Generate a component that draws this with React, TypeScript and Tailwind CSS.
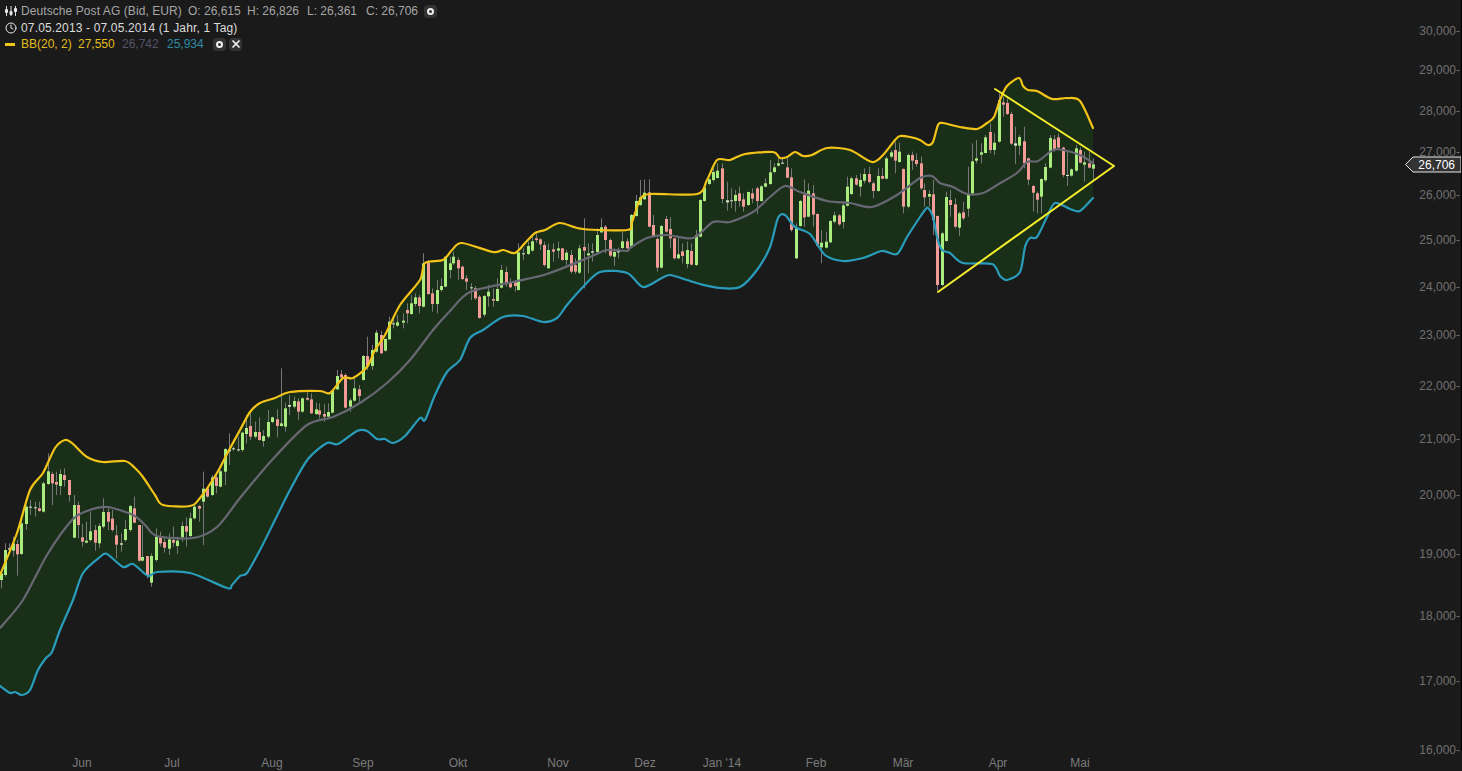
import { Clock, X } from 'lucide-react';

// band lines in page pixels
const upperBand = '0,575 17,533 30,490 43,473 55,448 65,440 72,443 87,457 103,462 125,461 135,468 143,477 155,495 163,505 190,506 200,498 217,473 228,452 240,430 250,412 260,403 275,398 290,392 320,391 330,393 343,378 353,378 367,367 375,350 385,335 400,305 420,280 425,263 443,260 452,250 462,243 493,252 503,250 515,253 525,243 535,233 545,230 560,223 583,229 627,230 632,222 640,200 650,194 697,194 707,180 717,160 730,160 745,154 773,152 780,158 787,157 795,152 803,156 812,155 827,148 850,150 872,162 883,155 895,140 900,136 910,137 920,140 928,145 933,142 938,125 943,123 960,127 977,129 987,123 994,117 1000,100 1007,86 1019,78 1023,86 1028,90 1037,91 1052,99 1067,98 1080,101 1093,128';
const midBand = '0,628 23,600 47,555 72,520 87,511 107,507 133,515 145,525 157,536 193,538 217,527 240,498 272,460 307,425 333,417 360,403 387,383 410,360 433,330 450,311 470,292 513,282 547,274 590,257 607,250 627,251 630,248 647,238 667,235 693,238 713,222 730,222 753,212 770,197 785,186 800,192 827,201 850,203 872,207 897,195 920,178 932,176 940,183 953,187 967,194 983,193 997,185 1017,173 1027,162 1038,161 1053,150 1063,150 1080,155 1093,163';
const lowerBand = '0,686 10,693 15,692 22,695 30,690 38,670 46,658 52,652 60,630 73,600 83,573 100,557 107,554 123,567 133,564 148,576 157,572 190,573 227,588 232,585 240,576 247,573 260,550 275,520 290,490 308,459 327,443 338,444 357,431 367,431 377,439 385,439 393,443 405,436 420,418 425,420 435,395 447,372 460,360 470,338 483,330 503,317 523,316 543,322 557,318 567,305 583,287 600,272 627,273 643,287 660,279 670,275 687,280 700,284 720,288 740,287 757,270 770,247 778,218 785,215 795,227 810,234 825,255 843,261 863,258 882,251 897,254 907,237 920,217 925,210 928,208 933,217 937,237 942,250 950,253 963,263 992,264 1000,276 1007,280 1020,272 1025,247 1030,238 1037,237 1047,217 1055,203 1070,209 1080,211 1093,198';

// catmull-rom through the read-off points, the chart's lines are rounded
function smooth(points: string) {
  const pts = points.split(' ').map(p => p.split(',').map(Number));
  let d = `M${pts[0][0]} ${pts[0][1]}`;
  for (let i = 0; i < pts.length - 1; i++) {
    const a = pts[Math.max(i - 1, 0)];
    const b = pts[i];
    const c = pts[i + 1];
    const e = pts[Math.min(i + 2, pts.length - 1)];
    const k = 1 / 7;
    d += ` C${b[0] + (c[0] - a[0]) * k} ${b[1] + (c[1] - a[1]) * k} ${c[0] - (e[0] - b[0]) * k} ${c[1] - (e[1] - b[1]) * k} ${c[0]} ${c[1]}`;
  }
  return d;
}

const upperPath = smooth(upperBand);
const lowerPath = smooth(lowerBand);
const midPath = smooth(midBand);
const fillPath = upperPath + ' L' + smooth(lowerBand.split(' ').reverse().join(' ')).slice(1) + ' Z';

// candles read off 3x crops: x top bottom wickTop wickBottom colour, crop origin alongside
const candleBlocks: { ox: number; oy: number; rows: string }[] = [
  { ox: 0, oy: 430, rows: '2 430 450 420 475 g;14 360 435 340 440 g;27 355 359 340 370 w;40 340 362 320 380 g;52 342 373 330 437 r;64 280 372 270 375 g;79 230 282 225 300 g;91 230 233 210 255 w;104 232 235 215 260 w;118 235 243 215 245 r;130 160 245 155 248 g;143 124 162 70 165 g;157 132 160 125 225 r;169 156 164 125 195 r;181 132 168 118 195 g;193 135 150 115 170 r;208 150 195 150 215 r;221 225 323 195 325 g;233 225 285 215 325 r;247 322 335 282 350 r;259 332 338 275 340 g;271 304 330 245 335 g;286 300 338 285 362 r;298 288 340 280 355 g;310 246 290 205 295 g;325 246 275 235 300 r;337 266 300 240 305 r;349 316 344 285 385 r;364 340 344 310 365 w;376 297 330 270 335 g;389 228 300 225 305 g;403 235 278 200 280 r;416 285 392 285 395 r;427 381 392 285 395 g;441 378 438 378 445 r;454 378 458 370 470 g;467 320 390 295 395 g;481 322 340 305 350 r;493 336 353 320 368 r;506 328 356 310 375 g;520 330 338 290 350 r;532 332 348 320 372 g;545 288 322 275 335 g;557 288 305 262 350 r;571 265 318 248 322 g;583 230 265 225 268 g;596 228 236 225 275 r;610 176 215 125 345 g;622 175 200 172 203 r;635 142 195 135 198 g;649 142 168 130 190 r;661 124 170 120 172 g;674 57 125 55 165 g;688 60 64 10 105 w;700 55 58 50 62 w;713 58 61 20 65 w' },
  { ox: 220, oy: 360, rows: '67 218 270 215 275 g;79 204 222 165 250 g;91 198 230 160 240 r;105 216 230 185 235 g;118 216 240 172 242 r;130 228 243 210 260 g;145 186 230 150 235 g;157 172 186 170 190 g;170 178 198 148 232 r;184 190 198 25 200 g;196 145 200 128 215 g;208 135 140 105 165 w;223 123 140 110 145 g;235 124 155 115 180 r;247 115 155 112 158 g;260 114 119 90 122 r;274 118 160 100 162 r;287 148 162 128 165 g;298 151 164 130 175 r;313 162 170 132 185 r;325 156 170 130 172 g;337 92 158 90 160 g;352 48 88 30 90 g;364 43 52 30 60 r;376 45 143 40 145 r;390 121 140 115 155 g;403 85 122 55 125 g;416 88 108 75 125 r' },
  { ox: 355, oy: 260, rows: '24 288 360 285 362 g;37 288 320 230 330 r;50 270 318 255 330 g;64 218 275 210 278 g;77 225 280 212 282 r;89 237 272 235 275 g;103 185 238 170 240 g;115 190 193 175 205 w;127 187 197 165 200 g' },
  { ox: 400, oy: 200, rows: '8 362 368 340 385 g;20 330 340 310 370 r;32 310 342 285 345 g;44 292 312 280 320 g;58 292 318 285 340 r;70 190 320 160 322 g;83 188 282 180 285 r;97 280 312 265 335 r;110 270 312 240 340 g;122 258 270 235 275 g;136 170 260 168 262 g;149 190 210 170 235 g;160 170 190 155 195 g;175 180 205 172 240 r;187 200 237 197 240 r;199 235 245 225 270 r;214 262 265 250 300 w;226 265 295 258 300 r;238 290 354 285 356 r;253 288 344 285 350 g;265 275 289 255 320 g;278 297 302 265 320 r;292 267 303 235 305 g;304 210 263 195 265 g;317 216 250 200 260 r;331 246 262 235 265 r;344 247 258 240 275 r;355 157 270 130 272 g;370 160 163 145 180 w;383 138 162 125 165 g;395 124 152 110 155 g;407 115 120 100 128 r;421 118 133 115 150 r;433 135 195 125 200 r;445 150 205 130 205 g;460 148 155 130 185 r;473 145 152 125 175 g;485 145 180 145 182 r;499 158 180 150 195 g;512 165 215 150 220 r;524 195 215 175 222 r;538 145 218 135 222 g;551 141 152 55 265 r;563 160 166 130 220 g;577 154 158 130 185 w;590 105 156 85 158 g;602 82 97 55 100 g;616 80 120 75 160 r;629 120 167 115 172 r;641 156 170 145 198 g;655 150 157 143 175 w;667 124 144 95 147 g;680 124 145 115 148 r' },
  { ox: 630, oy: 140, rows: '4 225 320 222 322 g;17 183 228 165 230 g;29 172 195 120 198 g;43 158 178 118 180 g;56 157 260 118 262 r;68 255 290 225 292 r;80 297 383 290 395 r;94 258 383 255 385 g;107 237 275 228 278 r;119 267 295 232 325 r;133 295 355 293 358 r;145 343 355 290 358 g;157 334 348 310 370 r;172 330 372 305 385 g;184 333 374 310 376 r;197 285 375 270 378 g;210 180 290 178 292 g;223 142 183 140 185 g;236 118 132 115 135 g;250 96 120 78 125 g;262 92 114 70 116 g;275 85 177 70 190 r;290 181 187 125 212 w;302 181 184 145 205 w;314 165 183 150 215 g;328 160 183 140 200 r;340 178 200 160 215 r;353 156 195 155 198 g;367 160 176 145 190 r;380 145 183 140 222 r;392 139 183 135 185 g;406 130 140 115 142 g;419 97 132 60 135 g;431 82 96 70 100 g;443 70 77 55 80 g;457 68 70 50 72 w;470 82 113 55 115 r;482 112 270 85 275 r;497 262 355 250 357 g;509 183 258 180 260 g;521 165 232 118 260 r;535 152 230 130 232 g;548 160 224 135 260 r;560 222 317 220 320 r;574 308 322 270 370 g;587 305 323 275 325 g;599 243 307 240 309 g;613 226 245 215 250 g;626 226 253 222 258 r;638 196 246 185 265 g;652 140 197 110 200 g;664 115 162 110 165 g;677 115 134 105 137 r;691 120 140 100 170 g;703 102 122 85 130 g;716 102 126 80 130 r;730 130 153 125 175 r;743 108 153 85 155 g;755 108 116 85 118 r;769 55 116 50 118 g;782 37 50 30 55 g;794 30 62 5 100 r;806 35 66 8 68 g;820 87 200 85 220 r;833 45 200 40 205 g;845 45 62 35 90 r;859 60 72 40 80 r' },
  { ox: 920, oy: 70, rows: '2 280 355 260 360 r;13 360 382 340 410 r;28 372 380 360 410 g;40 373 450 330 495 r;52 438 645 436 662 r;67 490 645 485 648 g;79 381 513 365 515 g;91 390 405 360 440 r;106 403 470 385 475 r;118 430 473 425 498 g;130 427 445 395 450 r;145 375 416 290 440 g;157 274 370 220 375 g;169 265 272 210 280 g;184 247 254 220 280 g;196 202 249 195 250 g;209 186 240 160 250 r;223 218 240 190 255 g;236 90 215 70 218 g;248 97 104 80 140 r;260 99 132 85 135 r;274 132 221 125 225 r;286 220 227 170 282 w;298 201 227 195 255 g;313 214 280 170 295 r;325 265 329 262 345 r;338 348 368 345 425 r;352 370 389 365 430 r;364 327 380 325 430 g;376 291 331 280 335 g;391 204 293 195 295 g;403 208 240 195 245 r;415 202 233 190 235 r;430 233 315 230 322 r;442 315 317 240 348 w;454 298 317 295 320 g;469 235 302 225 305 g;481 240 278 232 280 r;493 277 284 245 335 g;507 280 293 245 295 r;520 283 296 265 330 g' },
];

const candles = candleBlocks.flatMap(block =>
  block.rows.split(';').map(row => {
    const [x, top, bottom, wickTop, wickBottom, colour] = row.split(' ');
    return {
      x: Math.round(block.ox + Number(x) / 3) + 0.5,
      top: block.oy + Number(top) / 3,
      bottom: block.oy + Number(bottom) / 3,
      wickTop: block.oy + Number(wickTop) / 3,
      wickBottom: block.oy + Number(wickBottom) / 3,
      colour,
    };
  })
);

const candleColours: Record<string, string> = { g: '#aaec7e', r: '#f29b97', w: '#d8e8c8' };

const priceLabels = [
  { label: '30,000-', y: 31 },
  { label: '29,000-', y: 70 },
  { label: '28,000-', y: 111 },
  { label: '27,000-', y: 152 },
  { label: '26,000-', y: 195 },
  { label: '25,000-', y: 240 },
  { label: '24,000-', y: 287 },
  { label: '23,000-', y: 335 },
  { label: '22,000-', y: 386 },
  { label: '21,000-', y: 439 },
  { label: '20,000-', y: 495 },
  { label: '19,000-', y: 554 },
  { label: '18,000-', y: 616 },
  { label: '17,000-', y: 681 },
  { label: '16,000-', y: 750 },
];

const monthLabels = [
  { label: 'Jun', x: 82 },
  { label: 'Jul', x: 172 },
  { label: 'Aug', x: 272 },
  { label: 'Sep', x: 363 },
  { label: 'Okt', x: 458 },
  { label: 'Nov', x: 558 },
  { label: 'Dez', x: 645 },
  { label: "Jan '14", x: 722 },
  { label: 'Feb', x: 816 },
  { label: 'Mär', x: 903 },
  { label: 'Apr', x: 998 },
  { label: 'Mai', x: 1080 },
];

function SlidersIcon() {
  return (
    <svg width="12" height="12" viewBox="0 0 12 12" className="shrink-0">
      <g stroke="#d8d8d8" strokeWidth="1" fill="none">
        <path d="M1.5 1v10M6 1v10M10.5 1v10" />
      </g>
      <g fill="#e8e8e8">
        <rect x="0" y="4" width="3" height="4" rx="1" />
        <rect x="4.5" y="6" width="3" height="4" rx="1" />
        <rect x="9" y="3" width="3" height="4" rx="1" />
      </g>
    </svg>
  );
}

function RingButton() {
  return (
    <span className="flex h-[13px] w-[13px] items-center justify-center rounded-sm bg-[#333333]">
      <span className="h-[7px] w-[7px] rounded-full border-2 border-[#f0f0f0]" />
    </span>
  );
}

function Legend() {
  return (
    <div className="absolute left-[5px] top-[3px] flex flex-col text-xs leading-[16.5px]">
      <div className="flex items-center text-[#a6a6a6]">
        <span className="w-[16px]"><SlidersIcon /></span>
        <span className="w-[167px] tracking-[0.08px]">Deutsche Post AG (Bid, EUR)</span>
        <span className="w-[59px]">O: 26,615</span>
        <span className="w-[60px]">H: 26,826</span>
        <span className="w-[59px]">L: 26,361</span>
        <span className="w-[58px]">C: 26,706</span>
        <RingButton />
      </div>
      <div className="flex items-center text-[#dcdcdc]">
        <span className="w-[16px]"><Clock size={12} strokeWidth={2} color="#e8e8e8" /></span>
        <span className="tracking-[0.15px]">07.05.2013 - 07.05.2014 (1 Jahr, 1 Tag)</span>
      </div>
      <div className="flex items-center">
        <span className="w-[16px]"><span className="block h-[3px] w-[10px] bg-[#f2c318]" /></span>
        <span className="w-[57px] text-[#e2bd1c]">BB(20, 2)</span>
        <span className="w-[44px] text-[#e2bd1c]">27,550</span>
        <span className="w-[45px] text-[#55556a]">26,742</span>
        <span className="w-[46px] text-[#2f8aa6]">25,934</span>
        <span className="mr-[3px]"><RingButton /></span>
        <span className="flex h-[13px] w-[13px] items-center justify-center rounded-sm bg-[#333333]">
          <X size={12} strokeWidth={3.5} color="#f0f0f0" />
        </span>
      </div>
    </div>
  );
}

function Chart() {
  return (
    <svg width="1400" height="751" viewBox="0 0 1400 751" className="absolute left-0 top-0">
      <path d={fillPath} fill="#1a2f17" />
      {candles.map((c, i) => (
        <g key={i}>
          <line x1={c.x} x2={c.x} y1={c.wickTop} y2={c.wickBottom} stroke="#777777" strokeWidth="1" />
          <rect x={c.x - 1.5} y={c.top} width="3" height={Math.max(c.bottom - c.top, 1)} fill={candleColours[c.colour]} />
        </g>
      ))}
      <g fill="none" strokeWidth="2.2" strokeLinejoin="round" strokeLinecap="round">
        <path d={midPath} stroke="#686874" />
        <path d={lowerPath} stroke="#2a9cbb" />
        <path d={upperPath} stroke="#f2c318" />
        <polyline points="995,89 1114,166 938,292" stroke="#f4ee2c" strokeWidth="2" />
      </g>
    </svg>
  );
}

export default function App() {
  return (
    <div className="flex h-[771px] w-[1462px] flex-col overflow-hidden bg-[#1a1a1a] font-['Liberation_Sans',Arial,sans-serif]">
      <div className="flex flex-1">
        <div className="relative flex-1">
          <Chart />
          <Legend />
        </div>
        <div className="relative w-[62px] border-r border-black text-xs text-[#707070]">
          {priceLabels.map(p => (
            <span key={p.label} className="absolute right-[1px] -translate-y-1/2 leading-none" style={{ top: p.y }}>
              {p.label}
            </span>
          ))}
          <div className="absolute left-[5px] top-[156px] h-[17px] w-[56px]">
            <svg width="56" height="17" viewBox="0 0 56 17" className="absolute left-0 top-0">
              <polygon points="0.5,8.5 8,1 56,1 56,16 8,16" fill="#333333" stroke="#e8e8e8" strokeWidth="1" />
            </svg>
            <span className="absolute right-[6px] top-[2px] text-xs leading-[14px] text-white">26,706</span>
          </div>
        </div>
      </div>
      <div className="relative h-[20px] text-xs text-[#7a7a7a]">
        {monthLabels.map(m => (
          <span key={m.label} className="absolute top-[5px] -translate-x-1/2 leading-[14px]" style={{ left: m.x }}>
            {m.label}
          </span>
        ))}
      </div>
    </div>
  );
}
